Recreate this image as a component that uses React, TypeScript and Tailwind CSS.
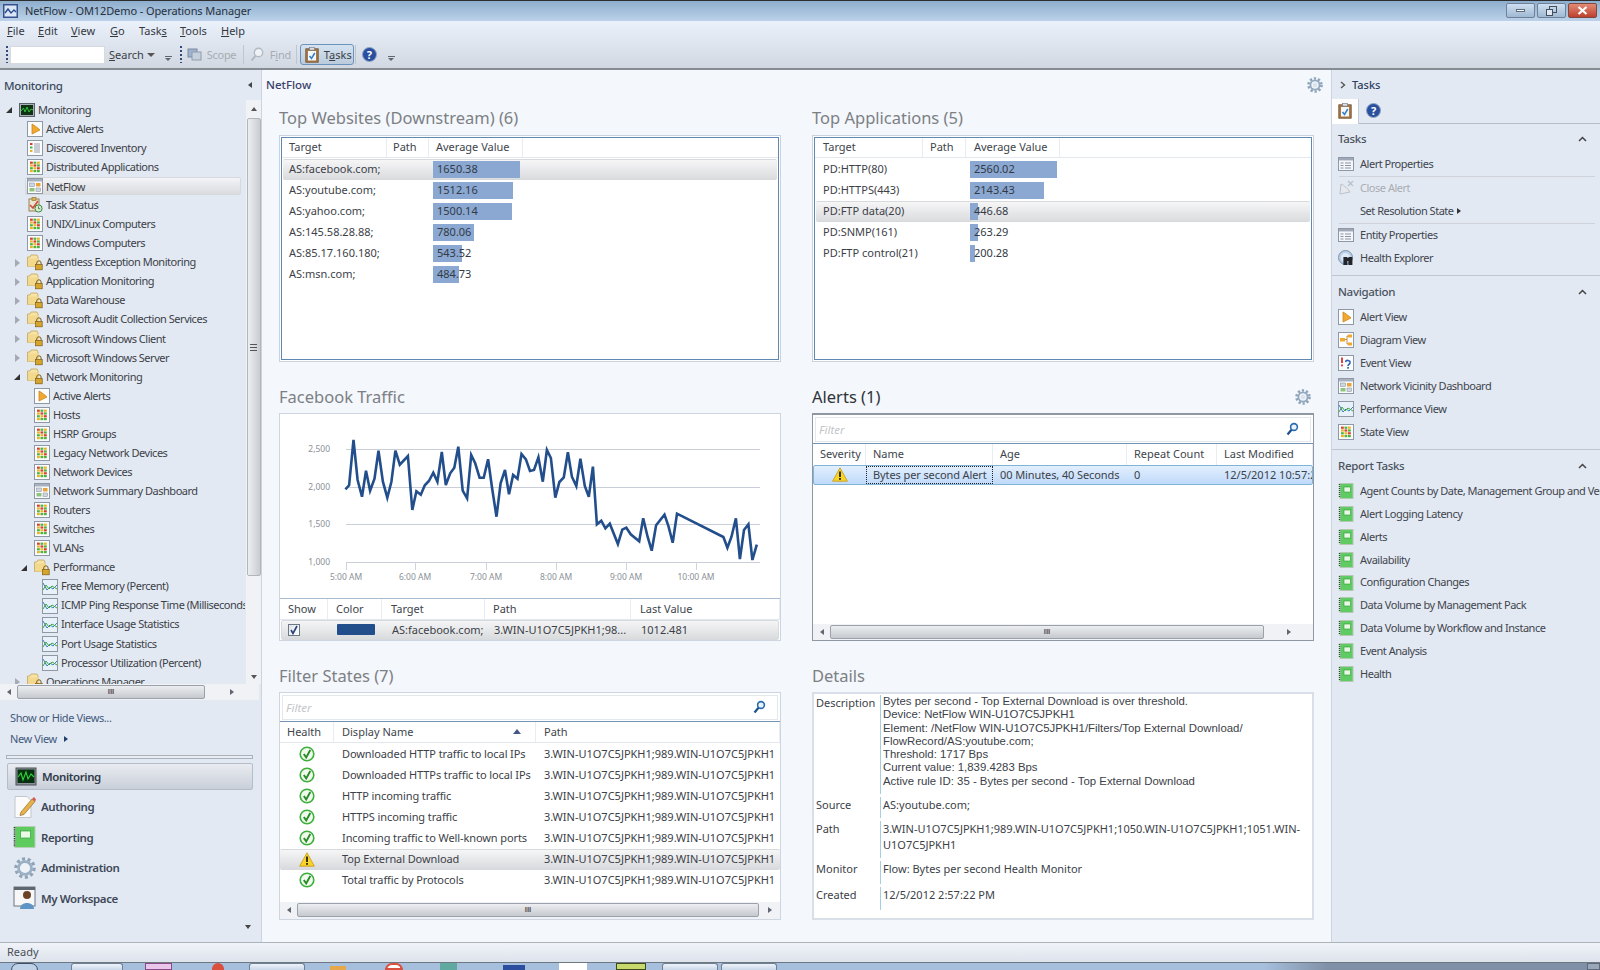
import { ReactNode } from 'react';

// small 16px view icons
function Frame({ children }: { children: ReactNode }) {
  return (
    <svg width="16" height="16" viewBox="0 0 16 16" className="shrink-0">
      <rect x="0.5" y="0.5" width="15" height="15" fill="#fbfcfe" stroke="#8f98a5" />
      {children}
    </svg>
  );
}

function StateIcon() {
  const c = ['#d8402c', '#4eb33c', '#e9b422', '#e9b422', '#d8402c', '#4eb33c', '#4eb33c', '#e9b422', '#d8402c', '#e9b422', '#4eb33c', '#4eb33c'];
  return (
    <Frame>
      {c.map((f, i) => (
        <rect key={i} x={3 + (i % 3) * 3.5} y={2.6 + Math.floor(i / 3) * 2.8} width="2.8" height="2.2" fill={f} />
      ))}
    </Frame>
  );
}

function AlertIcon() {
  return (
    <Frame>
      <path d="M5 3 C7 4 11 7 13 9 L5 13 Z" fill="#f0a92e" stroke="#c77d16" strokeWidth="0.7" />
    </Frame>
  );
}

function InventoryIcon() {
  return (
    <Frame>
      <rect x="3" y="3" width="2.5" height="2" fill="#d8402c" />
      <rect x="3" y="6.5" width="2.5" height="2" fill="#4eb33c" />
      <rect x="3" y="10" width="2.5" height="2" fill="#e9b422" />
      <path d="M7 4h6M7 6h6M7 8h6M7 10h6M7 12h6" stroke="#8a93a3" strokeWidth="0.9" />
    </Frame>
  );
}

function DashIcon() {
  return (
    <Frame>
      <rect x="1" y="1" width="14" height="2.5" fill="#a7b1bf" />
      <rect x="2.5" y="5" width="5" height="3.5" fill="#cfd6df" stroke="#7f8896" strokeWidth="0.5" />
      <rect x="9" y="5" width="4.5" height="3.5" fill="#e8a33a" />
      <rect x="2.5" y="10" width="5" height="3.5" fill="#8fc37c" />
      <rect x="9" y="10" width="4.5" height="3.5" fill="#cfd6df" stroke="#7f8896" strokeWidth="0.5" />
    </Frame>
  );
}

function PerfIcon() {
  return (
    <Frame>
      <rect x="1" y="1" width="14" height="14" fill="#e8f0fa" />
      <path d="M1 4 L5 11 L8 8 L11 10 L15 6" stroke="#3d7fc7" strokeWidth="1" fill="none" />
      <path d="M1 11 L4 6 L7 10 L10 7 L15 10" stroke="#41a83a" strokeWidth="1" fill="none" />
    </Frame>
  );
}

function TaskStatusIcon() {
  return (
    <svg width="16" height="16" viewBox="0 0 16 16" className="shrink-0">
      <rect x="2" y="2" width="10" height="12" fill="#e9e4d4" stroke="#9a8050" />
      <rect x="5" y="0.5" width="4" height="3" fill="#d8b25a" stroke="#8e6a24" strokeWidth="0.6" />
      <path d="M3 8 L6 11 L11 4" stroke="#d24a36" strokeWidth="1.6" fill="none" />
      <circle cx="11.5" cy="11.5" r="3.6" fill="#d7ecd2" stroke="#3a8a3a" />
      <path d="M11.5 9.5V11.7H13.2" stroke="#2f6f2f" strokeWidth="0.8" fill="none" />
    </svg>
  );
}

function FolderLock() {
  return (
    <svg width="16" height="17" viewBox="0 0 16 17" className="shrink-0">
      <path d="M0.5 3 H3 L4 1 H10 L11 3 V12.5 H0.5 Z" fill="#f7e3a6" stroke="#c2a45e" strokeWidth="0.8" />
      <rect x="1" y="4.5" width="11" height="8" fill="#f3d98d" />
      <path d="M9.7 10.5 V9 a2.2 2.2 0 0 1 4.4 0 V10.5" stroke="#7d5c17" fill="none" />
      <rect x="8.6" y="10.4" width="6.6" height="5.4" fill="#d6a52c" stroke="#7d5c17" strokeWidth="0.7" />
    </svg>
  );
}

function MonitorIcon() {
  return (
    <svg width="16" height="14" viewBox="0 0 16 14" className="shrink-0">
      <rect x="0.5" y="0.5" width="15" height="13" fill="#a9afb8" stroke="#5a6068" />
      <rect x="2" y="2" width="12" height="10" fill="#0d3313" />
      <path d="M2 8 L4.5 5 L6 9 L8 4 L10 9 L12 6 L14 7" stroke="#35d03f" strokeWidth="0.9" fill="none" />
    </svg>
  );
}

function ReportIcon() {
  return (
    <svg width="16" height="16" viewBox="0 0 16 16" className="shrink-0">
      <rect x="2" y="0.5" width="13" height="15" fill="#5fcb62" stroke="#b5c8b5" />
      <path d="M1.5 1v14" stroke="#2f4f33" strokeWidth="1.4" strokeDasharray="1 1" />
      <rect x="6" y="4" width="6.5" height="5" fill="#e7f8e4" stroke="#2f9a38" strokeWidth="0.6" />
    </svg>
  );
}

function PropsIcon() {
  return (
    <svg width="16" height="14" viewBox="0 0 16 14" className="shrink-0">
      <rect x="0.5" y="0.5" width="15" height="13" fill="#f4f6f9" stroke="#8f98a5" />
      <rect x="1" y="1" width="14" height="2.4" fill="#9ea8b6" />
      <path d="M2.5 6h3M7 6h6M2.5 8.5h3M7 8.5h6M2.5 11h3M7 11h6" stroke="#8a93a3" strokeWidth="1" />
    </svg>
  );
}

function CloseAlertIcon() {
  return (
    <svg width="16" height="16" viewBox="0 0 16 16" className="shrink-0">
      <path d="M3 4 C6 5 10 9 12 12 L2 14 Z" fill="#e6e8ec" stroke="#bcc1c9" />
      <path d="M10 1 L15 6 M15 1 L10 6" stroke="#bcc1c9" strokeWidth="1.4" />
    </svg>
  );
}

function HealthExplorerIcon() {
  return (
    <svg width="16" height="16" viewBox="0 0 16 16" className="shrink-0">
      <circle cx="7.5" cy="7.5" r="7" fill="#b9d0ea" stroke="#7f93a8" />
      <circle cx="7.5" cy="7.5" r="4.5" fill="#dfeaf6" />
      <rect x="5.4" y="7" width="4" height="8" fill="#22252a" />
      <rect x="10.4" y="7" width="4" height="8" fill="#22252a" />
      <rect x="9" y="8" width="2" height="3" fill="#22252a" />
    </svg>
  );
}

function DiagramIcon() {
  return (
    <Frame>
      <rect x="2" y="6" width="5" height="3.5" fill="#f0a92e" />
      <rect x="10" y="2.5" width="4" height="3" fill="#f0a92e" />
      <rect x="10" y="10.5" width="4" height="3" fill="#f0a92e" />
      <path d="M7 7.5h2V4h1M9 7.5V12h1" stroke="#b27618" strokeWidth="0.8" fill="none" />
    </Frame>
  );
}

function EventIcon() {
  return (
    <Frame>
      <path d="M4 2.5V8" stroke="#d7342a" strokeWidth="1.8" />
      <rect x="3.1" y="9.5" width="1.8" height="1.8" fill="#d7342a" />
      <path d="M7.5 7 C8 4.5 12.5 5 12 8 C11.7 9.5 10 9.5 10 11" stroke="#2e5fb5" strokeWidth="1.5" fill="none" />
      <rect x="9.2" y="12" width="1.7" height="1.7" fill="#2e5fb5" />
    </Frame>
  );
}

function Gear({ size = 16 }: { size?: number }) {
  return (
    <svg width={size} height={size} viewBox="0 0 16 16" className="shrink-0">
      <circle cx="8" cy="8" r="6.5" fill="none" stroke="#8ea4bb" strokeWidth="2.6" strokeDasharray="2.2 1.9" />
      <circle cx="8" cy="8" r="4.6" fill="#eef3f8" stroke="#93a8be" strokeWidth="1.8" />
      <circle cx="8" cy="8" r="2.2" fill="#dbe4ee" />
    </svg>
  );
}

function Magnifier() {
  return (
    <svg width="13" height="14" viewBox="0 0 13 14" className="shrink-0">
      <circle cx="8" cy="5" r="3.4" fill="#eaf3fb" stroke="#2a6cad" strokeWidth="1.6" />
      <path d="M5.5 7.8 L1.5 12.5" stroke="#1e4f8f" strokeWidth="2.2" />
    </svg>
  );
}

function OkIcon() {
  return (
    <svg width="16" height="16" viewBox="0 0 16 16" className="shrink-0">
      <circle cx="8" cy="8" r="6.8" fill="#f0fbee" stroke="#3fae3c" strokeWidth="1.6" />
      <path d="M4.8 8 L7.2 11.4 L11.3 4" fill="none" stroke="#2c8a2a" strokeWidth="1.9" />
    </svg>
  );
}

function WarnIcon() {
  return (
    <svg width="16" height="15" viewBox="0 0 16 15" className="shrink-0">
      <path d="M8 0.8 L15.4 14.2 H0.6 Z" fill="#f9d423" stroke="#c7971a" strokeWidth="0.8" />
      <path d="M8 4.6V10" stroke="#222" strokeWidth="1.8" />
      <rect x="7.1" y="11" width="1.8" height="1.8" fill="#222" />
    </svg>
  );
}

function ClipboardIcon() {
  return (
    <svg width="14" height="16" viewBox="0 0 14 16" className="shrink-0">
      <rect x="0.8" y="1.8" width="12.4" height="13.4" fill="#a8794a" stroke="#6f4c27" strokeWidth="0.8" />
      <rect x="3" y="4" width="8" height="9.5" fill="#f6f9fc" />
      <rect x="4.5" y="0.5" width="5" height="2.6" fill="#d9dee4" stroke="#6f7782" strokeWidth="0.6" />
      <path d="M4.5 9 L6.5 11.5 L9.8 6" stroke="#2f7fd0" strokeWidth="1.5" fill="none" />
    </svg>
  );
}

function HelpIcon() {
  return (
    <div className="w-[15px] h-[15px] rounded-full bg-[#2a4f9e] border border-[#8fa6c8] flex items-center justify-center text-white text-[11px] font-bold leading-none shrink-0">
      ?
    </div>
  );
}

// big wunderbar icons
function NavMonitoring() {
  return (
    <svg width="22" height="20" viewBox="0 0 22 20">
      <rect x="1" y="1" width="20" height="17" fill="#8d929a" stroke="#4b5058" />
      <rect x="2.5" y="2.5" width="17" height="13.5" fill="#07300e" />
      <path d="M3 10 L6 6 L8 13 L11 5 L13 12 L16 7 L19 10" stroke="#2fd23c" strokeWidth="1.1" fill="none" />
    </svg>
  );
}

function NavAuthoring() {
  return (
    <svg width="24" height="24" viewBox="0 0 24 24">
      <path d="M2 1.5 H14 L18 5.5 V22.5 H2 Z" fill="#fbfbfb" stroke="#c2c6cd" />
      <path d="M8 17 L19 4 L22 6.5 L11 19.5 L7 20.5 Z" fill="#e8b24a" stroke="#93702a" strokeWidth="0.7" />
      <path d="M19 4 L21 2 L23 4.5 L22 6.5 Z" fill="#d8574c" />
    </svg>
  );
}

function NavReporting() {
  return (
    <svg width="23" height="22" viewBox="0 0 23 22">
      <rect x="2" y="0.5" width="20" height="21" fill="#5ecb5f" stroke="#b7cdb7" />
      <path d="M1.5 1v20" stroke="#27402a" strokeWidth="1.6" strokeDasharray="1.2 1" />
      <rect x="7.5" y="5" width="10" height="7" fill="#e8f9e5" stroke="#33a03c" strokeWidth="0.7" />
    </svg>
  );
}

function NavAdmin() {
  return (
    <svg width="22" height="22" viewBox="0 0 22 22">
      <circle cx="11" cy="11" r="9" fill="none" stroke="#8fa3b8" strokeWidth="3.4" strokeDasharray="3 2.6" />
      <circle cx="11" cy="11" r="6.4" fill="#eff3f7" stroke="#9bb0c5" strokeWidth="2.6" />
    </svg>
  );
}

function NavWorkspace() {
  return (
    <svg width="24" height="24" viewBox="0 0 24 24">
      <rect x="1" y="1" width="21" height="19" fill="#f7f7f7" stroke="#6f7782" />
      <rect x="1" y="1" width="21" height="3" fill="#5e6670" />
      <circle cx="14" cy="9" r="4" fill="#6a4228" />
      <path d="M7 23 C7 15 21 15 21 23 Z" fill="#5f94c6" />
    </svg>
  );
}

// scrollbar bits
function ArrowH({ dir }: { dir: 'l' | 'r' }) {
  return (
    <span
      className={
        dir === 'l'
          ? 'w-0 h-0 border-y-[3px] border-y-transparent border-r-[4px] border-r-[#5f6670]'
          : 'w-0 h-0 border-y-[3px] border-y-transparent border-l-[4px] border-l-[#5f6670]'
      }
    />
  );
}

function Grip() {
  return <span className="text-[8px] leading-none text-[#555] font-['Liberation_Sans',sans-serif] font-bold">III</span>;
}

function HScroll({ className, thumbClass }: { className: string; thumbClass: string }) {
  return (
    <div className={`flex items-center bg-[#f0f2f5] ${className}`}>
      <div className="w-[17px] flex justify-center"><ArrowH dir="l" /></div>
      <div className={`h-[14px] rounded-[2px] border border-[#9aa1aa] bg-gradient-to-b from-[#eceef1] to-[#c6c9ce] flex items-center justify-center ${thumbClass}`}>
        <Grip />
      </div>
      <div className="flex-1 flex justify-center"><ArrowH dir="r" /></div>
    </div>
  );
}

type TreeRow = { label: string; level: number; icon: ReactNode; exp?: 'open' | 'closed'; selected?: boolean };

const treeRows: TreeRow[] = [
  { label: 'Monitoring', level: 0, icon: <MonitorIcon />, exp: 'open' },
  { label: 'Active Alerts', level: 1, icon: <AlertIcon /> },
  { label: 'Discovered Inventory', level: 1, icon: <InventoryIcon /> },
  { label: 'Distributed Applications', level: 1, icon: <StateIcon /> },
  { label: 'NetFlow', level: 1, icon: <DashIcon />, selected: true },
  { label: 'Task Status', level: 1, icon: <TaskStatusIcon /> },
  { label: 'UNIX/Linux Computers', level: 1, icon: <StateIcon /> },
  { label: 'Windows Computers', level: 1, icon: <StateIcon /> },
  { label: 'Agentless Exception Monitoring', level: 1, icon: <FolderLock />, exp: 'closed' },
  { label: 'Application Monitoring', level: 1, icon: <FolderLock />, exp: 'closed' },
  { label: 'Data Warehouse', level: 1, icon: <FolderLock />, exp: 'closed' },
  { label: 'Microsoft Audit Collection Services', level: 1, icon: <FolderLock />, exp: 'closed' },
  { label: 'Microsoft Windows Client', level: 1, icon: <FolderLock />, exp: 'closed' },
  { label: 'Microsoft Windows Server', level: 1, icon: <FolderLock />, exp: 'closed' },
  { label: 'Network Monitoring', level: 1, icon: <FolderLock />, exp: 'open' },
  { label: 'Active Alerts', level: 2, icon: <AlertIcon /> },
  { label: 'Hosts', level: 2, icon: <StateIcon /> },
  { label: 'HSRP Groups', level: 2, icon: <StateIcon /> },
  { label: 'Legacy Network Devices', level: 2, icon: <StateIcon /> },
  { label: 'Network Devices', level: 2, icon: <StateIcon /> },
  { label: 'Network Summary Dashboard', level: 2, icon: <DashIcon /> },
  { label: 'Routers', level: 2, icon: <StateIcon /> },
  { label: 'Switches', level: 2, icon: <StateIcon /> },
  { label: 'VLANs', level: 2, icon: <StateIcon /> },
  { label: 'Performance', level: 2, icon: <FolderLock />, exp: 'open' },
  { label: 'Free Memory (Percent)', level: 3, icon: <PerfIcon /> },
  { label: 'ICMP Ping Response Time (Milliseconds)', level: 3, icon: <PerfIcon /> },
  { label: 'Interface Usage Statistics', level: 3, icon: <PerfIcon /> },
  { label: 'Port Usage Statistics', level: 3, icon: <PerfIcon /> },
  { label: 'Processor Utilization (Percent)', level: 3, icon: <PerfIcon /> },
  { label: 'Operations Manager', level: 1, icon: <FolderLock />, exp: 'closed' },
];

const levelPad = ['pl-[3px]', 'pl-[11px]', 'pl-[18px]', 'pl-[26px]'];

function Expander({ kind }: { kind?: 'open' | 'closed' }) {
  if (kind === 'open') {
    return <span className="w-0 h-0 border-l-[6px] border-l-transparent border-b-[6px] border-b-[#333]" />;
  }
  if (kind === 'closed') {
    return <span className="w-0 h-0 border-y-[4px] border-y-transparent border-l-[5px] border-l-[#a4abb5]" />;
  }
  return null;
}

function Tree() {
  return (
    <div className="h-[584px] flex">
      <div className="w-[245px] overflow-hidden">
        {treeRows.map((r, i) => (
          <div key={i} className={`h-[19.07px] flex items-center whitespace-nowrap tracking-[-0.48px] ${levelPad[r.level]}`}>
            <div className="w-[16px] shrink-0 flex justify-center pr-[4px]"><Expander kind={r.exp} /></div>
            <div className="relative z-10 w-[16px] h-[17px] shrink-0 flex items-center justify-center"><div className="flex">{r.icon}</div></div>
            <div
              className={
                r.selected
                  ? 'ml-[-18px] pl-[20px] w-[216px] h-[18px] leading-[17px] rounded-[2px] border border-[#d6d9de] bg-gradient-to-b from-[#f3f4f6] to-[#d9dbdf]'
                  : 'pl-[3px]'
              }
            >
              {r.label}
            </div>
          </div>
        ))}
      </div>
      <div className="w-[15px] ml-[1px] bg-[#f0f2f5] flex flex-col items-center">
        <div className="h-[18px] flex items-center"><span className="w-0 h-0 border-x-[3px] border-x-transparent border-b-[4px] border-b-[#555]" /></div>
        <div className="w-[14px] h-[458px] rounded-[2px] border border-[#b1b6bd] bg-gradient-to-r from-[#eceef1] to-[#c9ccd1] flex items-center justify-center">
          <span className="w-[7px] h-[7px] border-y border-[#555] flex items-center"><span className="w-full h-px bg-[#555]" /></span>
        </div>
        <div className="flex-1 flex items-end pb-[5px]"><span className="w-0 h-0 border-x-[3px] border-x-transparent border-t-[4px] border-t-[#555]" /></div>
      </div>
    </div>
  );
}

const wunderbar = [
  { label: 'Monitoring', icon: <NavMonitoring />, active: true },
  { label: 'Authoring', icon: <NavAuthoring /> },
  { label: 'Reporting', icon: <NavReporting /> },
  { label: 'Administration', icon: <NavAdmin /> },
  { label: 'My Workspace', icon: <NavWorkspace /> },
];

function LeftPanel() {
  return (
    <aside className="w-[262px] shrink-0 bg-[#e3e9f2] border-r border-[#cdd4de] flex flex-col">
      <div className="h-[30.5px] flex items-center justify-between pl-[4px] pr-[9px] text-[11.5px] tracking-[-0.3px] font-medium text-[#3c4a60]">
        <span>Monitoring</span>
        <span className="w-0 h-0 border-y-[3.5px] border-y-transparent border-r-[4px] border-r-[#444]" />
      </div>
      <Tree />
      <HScroll className="h-[16px] w-[259px]" thumbClass="w-[188px]" />
      <div className="pl-[10px] mt-[7px] h-[21px] flex items-center text-[#3f5a7d] tracking-[-0.4px]">Show or Hide Views...</div>
      <div className="pl-[10px] h-[21px] flex items-center text-[#3f5a7d] gap-[7px] tracking-[-0.4px]">
        New View
        <span className="w-0 h-0 border-y-[3.5px] border-y-transparent border-l-[4px] border-l-[#23406c]" />
      </div>
      <div className="mx-[6px] mt-[6px] w-[247px] h-[4px] border border-[#aab1bb] bg-[#e9edf3]" />
      <div className="mt-[4px] flex flex-col">
        {wunderbar.map(w => (
          <div
            key={w.label}
            className={
              w.active
                ? 'mx-[7px] w-[246px] h-[27px] mb-[3px] rounded-[2px] border border-[#b4bdc9] bg-gradient-to-b from-[#e9ecf1] to-[#c9cfd9] flex items-center text-[11.5px] tracking-[-0.4px] font-semibold text-[#303a48]'
                : 'mx-[7px] w-[246px] h-[27px] mb-[3.4px] flex items-center text-[11.5px] tracking-[-0.4px] font-semibold text-[#3d4858]'
            }
          >
            <div className="w-[34px] flex justify-center pl-[1px] shrink-0">{w.icon}</div>
            <span>{w.label}</span>
          </div>
        ))}
      </div>
      <div className="flex justify-end pr-[10px] mt-[10px]">
        <span className="w-0 h-0 border-x-[3.5px] border-x-transparent border-t-[4px] border-t-[#444]" />
      </div>
    </aside>
  );
}

function Section({ title, dark, gear, top, children }: { title: string; dark?: boolean; gear?: boolean; top?: boolean; children: ReactNode }) {
  return (
    <section className="w-[502px] flex flex-col">
      <div className={top ? 'h-[29px] flex items-center justify-between pr-[3px] pb-[5px]' : 'h-[29px] flex items-center justify-between pr-[3px] pb-[2px]'}>
        <h2 className={dark ? 'text-[16.5px] text-[#2f3338]' : 'text-[16.5px] text-[#7c8084]'}>{title}</h2>
        {gear && <Gear />}
      </div>
      {children}
    </section>
  );
}

type Col = { label: string; className: string };

function HeaderRow({ cols, className }: { cols: Col[]; className?: string }) {
  return (
    <div className={`flex text-[#40454c] border-b border-[#e3e8ef] ${className ?? ''}`}>
      {cols.map(c => (
        <div key={c.label} className={`border-r border-[#e8edf3] flex items-center whitespace-nowrap shrink-0 ${c.className}`}>
          {c.label}
        </div>
      ))}
    </div>
  );
}

type BarRow = { name: string; value: string; bar: number };

function BarTable({ cols, rows, selected, firstCol }: { cols: Col[]; rows: BarRow[]; selected: number; firstCol: string }) {
  return (
    <div className="h-[227px] border border-[#c9d3df] bg-white p-px">
      <div className="h-full border border-[#5f89b2] bg-white">
        <HeaderRow cols={cols} className="h-[20px]" />
        <div className="pt-px">
          {rows.map((r, i) => (
            <div
              key={r.name}
              className={
                i === selected
                  ? 'h-[21px] flex items-center rounded-[2px] mx-px border-y border-[#d6d9de] bg-gradient-to-b from-[#f6f6f7] to-[#dbdcde]'
                  : 'h-[21px] flex items-center mx-px'
              }
            >
              <div className={`shrink-0 ${firstCol}`}>{r.name}</div>
              <div className="relative h-[17px] flex items-center">
                <div className="absolute left-0 top-0 h-[17px] bg-[#8aa8d2]" style={{ width: r.bar }} />
                <span className="relative pl-[4px] text-[#333a45]">{r.value}</span>
              </div>
            </div>
          ))}
        </div>
      </div>
    </div>
  );
}

const rawLine: [number, number][] = [
  [226,328],[237,316],[250,180],[262,300],[275,350],[287,272],[299,332],[312,296],[324,212],[337,305],[350,353],[362,305],[374,212],[387,254],[411,228],[424,390],[436,334],[449,344],[461,316],[473,303],[486,278],[498,305],[511,216],[523,315],[536,280],[548,263],[560,200],[573,332],[586,355],[598,225],[610,250],[623,293],[635,293],[648,238],[660,325],[673,410],[685,310],[698,270],[710,343],[722,285],[735,296],[747,222],[760,238],[772,273],[784,270],[797,232],[810,305],[822,210],[834,234],[847,353],[859,306],[872,292],[884,217],[896,290],[909,318],[921,236],[934,318],[946,350],[958,260],[970,433],[983,422],[995,445],[1008,431],[1032,492],[1045,449],[1057,443],[1070,463],[1095,484],[1107,415],[1120,470],[1132,512],[1145,436],[1170,404],[1182,440],[1194,488],[1207,401],[1344,471],[1356,503],[1368,470],[1381,415],[1393,537],[1405,450],[1418,433],[1430,540],[1443,494],
];

function TrafficChart() {
  const pts = rawLine.map(([x, y]) => `${(x / 2.958 - 11).toFixed(1)},${(y / 3 - 34).toFixed(1)}`).join(' ');
  const grid = [
    { y: 35, label: '2,500' },
    { y: 73, label: '2,000' },
    { y: 110, label: '1,500' },
    { y: 148, label: '1,000' },
  ];
  const ticks = [
    { x: 66, label: '5:00 AM' },
    { x: 135, label: '6:00 AM' },
    { x: 206, label: '7:00 AM' },
    { x: 276, label: '8:00 AM' },
    { x: 346, label: '9:00 AM' },
    { x: 416, label: '10:00 AM' },
  ];
  return (
    <svg width="498" height="184" viewBox="0 0 498 184" className="block shrink-0">
      {grid.map(g => (
        <g key={g.y}>
          <line x1="66" x2="480" y1={g.y + 0.5} y2={g.y + 0.5} stroke="#c9ced8" />
          <text x="50" y={g.y + 3} textAnchor="end" fontSize="8.5" fill="#8b8f96">{g.label}</text>
        </g>
      ))}
      {ticks.map(t => (
        <g key={t.x}>
          <line x1={t.x + 0.5} x2={t.x + 0.5} y1="148" y2="156" stroke="#cfd4dc" />
          <text x={t.x} y="166" textAnchor="middle" fontSize="8.5" fill="#8b8f96">{t.label}</text>
        </g>
      ))}
      <polyline points={pts} fill="none" stroke="#234e8c" strokeWidth="2.6" strokeLinejoin="miter" />
    </svg>
  );
}

function ChartPanel() {
  return (
    <div className="h-[228px] border border-[#ccd5e0] bg-white flex flex-col">
      <TrafficChart />
      <div className="border-t border-[#a9bdd2]">
        <HeaderRow
          className="h-[21px]"
          cols={[
            { label: 'Show', className: 'w-[48px] pl-[8px]' },
            { label: 'Color', className: 'w-[54px] pl-[8px]' },
            { label: 'Target', className: 'w-[103px] pl-[9px]' },
            { label: 'Path', className: 'w-[146px] pl-[8px]' },
            { label: 'Last Value', className: 'flex-1 pl-[9px]' },
          ]}
        />
      </div>
      <div className="flex-1 mx-px flex items-center border border-[#d6d9de] rounded-[2px] bg-gradient-to-b from-[#f5f5f6] to-[#dadbdd] whitespace-nowrap">
        <div className="w-[47px] pl-[6px]">
          <div className="w-[12px] h-[12px] border border-[#6c7886] bg-gradient-to-br from-[#dfe3ea] to-[#fff] flex items-center justify-center">
            <svg width="10" height="10" viewBox="0 0 10 10"><path d="M2 5 L4 8.5 L8 1" stroke="#2b3f78" strokeWidth="1.6" fill="none" /></svg>
          </div>
        </div>
        <div className="w-[54px] pl-[8px]"><div className="w-[38px] h-[11px] rounded-[1px] bg-[#234e8c]" /></div>
        <div className="w-[103px] pl-[9px]">AS:facebook.com;</div>
        <div className="w-[146px] pl-[8px]">3.WIN-U1O7C5JPKH1;98...</div>
        <div className="pl-[9px]">1012.481</div>
      </div>
    </div>
  );
}

function FilterBox() {
  return (
    <div className="h-[25px] mx-[2px] mt-[2px] border border-[#e3e8ef] bg-white flex items-center justify-between pl-[3px] pr-[11px] italic text-[#c3c6cb] text-[11.5px]">
      <span>Filter</span>
      <Magnifier />
    </div>
  );
}

function AlertsPanel() {
  const cols: Col[] = [
    { label: 'Severity', className: 'w-[53px] pl-[7px]' },
    { label: 'Name', className: 'w-[127px] pl-[7px]' },
    { label: 'Age', className: 'w-[134px] pl-[7px]' },
    { label: 'Repeat Count', className: 'w-[90px] pl-[7px]' },
    { label: 'Last Modified', className: 'flex-1 pl-[7px]' },
  ];
  return (
    <div className="h-[228px] border border-[#8e97a3] border-t-2 bg-white flex flex-col overflow-hidden">
      <FilterBox />
      <div className="border-t border-[#7394b5] mt-[1px]">
        <HeaderRow cols={cols} className="h-[21px] border-b-0" />
      </div>
      <div className="h-[20px] flex items-center border border-[#7fb4d6] rounded-[2px] bg-gradient-to-b from-[#e2effd] to-[#c0dafb] whitespace-nowrap overflow-hidden">
        <div className="w-[52px] flex justify-center shrink-0"><WarnIcon /></div>
        <div className="w-[127px] h-full pl-[6px] flex items-center border border-dotted border-[#222] shrink-0 tracking-[-0.1px]">Bytes per second Alert</div>
        <div className="w-[134px] pl-[7px] shrink-0 tracking-[-0.1px]">00 Minutes, 40 Seconds</div>
        <div className="w-[90px] pl-[7px] shrink-0">0</div>
        <div className="pl-[7px] shrink-0">12/5/2012 10:57:22 AM</div>
      </div>
      <div className="flex-1" />
      <HScroll className="h-[16px]" thumbClass="w-[434px]" />
    </div>
  );
}

const filterRows = [
  'Downloaded HTTP traffic to local IPs',
  'Downloaded HTTPs traffic to local IPs',
  'HTTP incoming traffic',
  'HTTPS incoming traffic',
  'Incoming traffic to Well-known ports',
  'Top External Download',
  'Total traffic by Protocols',
];

function FilterStates() {
  return (
    <div className="h-[228px] border border-[#ccd5e0] bg-white flex flex-col overflow-hidden">
      <FilterBox />
      <div className="border-t border-[#7394b5] mt-[1px] relative">
        <HeaderRow
          className="h-[21px]"
          cols={[
            { label: 'Health', className: 'w-[54px] pl-[7px]' },
            { label: 'Display Name', className: 'w-[202px] pl-[8px]' },
            { label: 'Path', className: 'flex-1 pl-[8px]' },
          ]}
        />
        <span className="absolute left-[233px] top-[7px] w-0 h-0 border-x-[4px] border-x-transparent border-b-[5px] border-b-[#44578a]" />
      </div>
      <div className="pt-px">
        {filterRows.map((name, i) => (
          <div
            key={name}
            className={
              i === 5
                ? 'h-[21px] flex items-center whitespace-nowrap rounded-[2px] border-y border-[#d6d9de] bg-gradient-to-b from-[#f6f6f7] to-[#d9dadd]'
                : 'h-[21px] flex items-center whitespace-nowrap'
            }
          >
            <div className="w-[54px] flex justify-center shrink-0 pr-[1px]">{i === 5 ? <WarnIcon /> : <OkIcon />}</div>
            <div className="w-[202px] pl-[8px] shrink-0 tracking-[-0.1px]">{name}</div>
            <div className="pl-[8px] overflow-hidden">3.WIN-U1O7C5JPKH1;989.WIN-U1O7C5JPKH1</div>
          </div>
        ))}
      </div>
      <div className="flex-1" />
      <HScroll className="h-[17px]" thumbClass="w-[462px]" />
    </div>
  );
}

function DetailRow({ label, height, children }: { label: string; height: string; children: ReactNode }) {
  return (
    <div className={`flex ${height}`}>
      <div className="w-[66px] shrink-0 pl-[2px]">{label}</div>
      <div className="flex-1 border-l border-[#a5cfe0] pl-[2px]">{children}</div>
    </div>
  );
}

function DetailsPanel() {
  return (
    <div className="h-[228px] border-2 border-[#d9dfe8] bg-white pt-[1px] leading-[16px] overflow-hidden">
      <DetailRow label="Description" height="h-[99px]">
        <div className="font-['Liberation_Sans',sans-serif] text-[11.4px] leading-[13.3px] text-[#3c4148]">
          Bytes per second - Top External Download is over threshold.<br />
          Device: NetFlow WIN-U1O7C5JPKH1<br />
          Element: /NetFlow WIN-U1O7C5JPKH1/Filters/Top External Download/<br />
          FlowRecord/AS:youtube.com;<br />
          Threshold: 1717 Bps<br />
          Current value: 1,839.4283 Bps<br />
          Active rule ID: 35 - Bytes per second - Top External Download
        </div>
      </DetailRow>
      <DetailRow label="Source" height="h-[24px] pt-[3px]">AS:youtube.com;</DetailRow>
      <DetailRow label="Path" height="h-[40px] pt-[3px]">
        3.WIN-U1O7C5JPKH1;989.WIN-U1O7C5JPKH1;1050.WIN-U1O7C5JPKH1;1051.WIN-<br />U1O7C5JPKH1
      </DetailRow>
      <DetailRow label="Monitor" height="h-[26px] pt-[3px]">Flow: Bytes per second Health Monitor</DetailRow>
      <DetailRow label="Created" height="h-[26px] pt-[3px]">12/5/2012 2:57:22 PM</DetailRow>
    </div>
  );
}

const websites: BarRow[] = [
  { name: 'AS:facebook.com;', value: '1650.38', bar: 87 },
  { name: 'AS:youtube.com;', value: '1512.16', bar: 80 },
  { name: 'AS:yahoo.com;', value: '1500.14', bar: 79 },
  { name: 'AS:145.58.28.88;', value: '780.06', bar: 41 },
  { name: 'AS:85.17.160.180;', value: '543.52', bar: 29 },
  { name: 'AS:msn.com;', value: '484.73', bar: 26 },
];

const apps: BarRow[] = [
  { name: 'PD:HTTP(80)', value: '2560.02', bar: 87 },
  { name: 'PD:HTTPS(443)', value: '2143.43', bar: 74 },
  { name: 'PD:FTP data(20)', value: '446.68', bar: 8 },
  { name: 'PD:SNMP(161)', value: '263.29', bar: 8 },
  { name: 'PD:FTP control(21)', value: '200.28', bar: 5 },
];

function MainPanel() {
  return (
    <main className="flex-1 bg-[#f4f7fc] flex flex-col pl-[17px]">
      <div className="h-[30px] ml-[-13px] mr-[8px] flex items-center justify-between text-[#3c3f6a] font-medium text-[11.5px]">
        <span>NetFlow</span>
        <Gear />
      </div>
      <div className="h-[6px]" />
      <div className="flex gap-[31px]">
        <Section top title="Top Websites (Downstream) (6)">
          <BarTable
            selected={0}
            firstCol="w-[150px] pl-[6px]"
            rows={websites}
            cols={[
              { label: 'Target', className: 'w-[105px] pl-[7px]' },
              { label: 'Path', className: 'w-[42px] pl-[6px]' },
              { label: 'Average Value', className: 'w-[94px] pl-[7px]' },
            ]}
          />
        </Section>
        <Section top title="Top Applications (5)">
          <BarTable
            selected={2}
            firstCol="w-[154px] pl-[7px]"
            rows={apps}
            cols={[
              { label: 'Target', className: 'w-[108px] pl-[8px]' },
              { label: 'Path', className: 'w-[43px] pl-[7px]' },
              { label: 'Average Value', className: 'w-[94px] pl-[8px]' },
            ]}
          />
        </Section>
      </div>
      <div className="h-[22px]" />
      <div className="flex gap-[31px]">
        <Section title="Facebook Traffic"><ChartPanel /></Section>
        <Section title="Alerts (1)" dark gear><AlertsPanel /></Section>
      </div>
      <div className="h-[22px]" />
      <div className="flex gap-[31px]">
        <Section title="Filter States (7)"><FilterStates /></Section>
        <Section title="Details"><DetailsPanel /></Section>
      </div>
    </main>
  );
}

function TaskItem({ icon, label, muted, className }: { icon?: ReactNode; label: string; muted?: boolean; className?: string }) {
  return (
    <div className={`h-[23px] flex items-center whitespace-nowrap tracking-[-0.48px] ${muted ? 'text-[#a9adb4]' : 'text-[#3f454e]'} ${className ?? ''}`}>
      <div className="w-[16px] ml-[6px] mr-[6px] shrink-0 flex justify-center">{icon}</div>
      <span>{label}</span>
    </div>
  );
}

function TaskHeader({ label }: { label: string }) {
  return (
    <div className="h-[26px] flex items-center justify-between pl-[6px] pr-[13px] text-[11.5px] tracking-[-0.3px] font-medium text-[#4a5361]">
      <span>{label}</span>
      <svg width="9" height="6" viewBox="0 0 9 6"><path d="M1 5 L4.5 1.5 L8 5" stroke="#444" strokeWidth="1.5" fill="none" /></svg>
    </div>
  );
}

const reports = [
  'Agent Counts by Date, Management Group and Version',
  'Alert Logging Latency',
  'Alerts',
  'Availability',
  'Configuration Changes',
  'Data Volume by Management Pack',
  'Data Volume by Workflow and Instance',
  'Event Analysis',
  'Health',
];

function RightPanel() {
  return (
    <aside className="w-[269px] shrink-0 bg-[#e3e9f2] border-l border-[#cdd4de] flex flex-col overflow-hidden">
      <div className="h-[29px] flex items-center pl-[8px] pt-[1px] text-[#2e3f63] text-[11px] font-medium">
        <svg width="6" height="8" viewBox="0 0 6 8" className="mr-[6px]"><path d="M1 1 L4.5 4 L1 7" stroke="#555" strokeWidth="1.4" fill="none" /></svg>
        Tasks
      </div>
      <div className="h-[25px] flex border-b border-[#b6bdc8]">
        <div className="w-[27px] h-[25px] bg-white border-r border-[#c4cad3] flex items-center justify-center"><ClipboardIcon /></div>
        <div className="ml-[7px] flex items-center"><HelpIcon /></div>
      </div>
      <div className="mt-[2px]"><TaskHeader label="Tasks" /></div>
      <div className="mt-[1px]">
        <TaskItem icon={<PropsIcon />} label="Alert Properties" />
        <div className="mx-[7px] w-[256px] h-px bg-[#cfd3d9]" />
        <TaskItem icon={<CloseAlertIcon />} label="Close Alert" muted />
        <div className="h-[23px] flex items-center pl-[28px] text-[#3f454e] gap-[3px] tracking-[-0.48px]">
          Set Resolution State
          <span className="w-0 h-0 border-y-[3.5px] border-y-transparent border-l-[4px] border-l-[#333]" />
        </div>
        <div className="mx-[7px] w-[256px] h-px bg-[#cfd3d9]" />
        <TaskItem icon={<PropsIcon />} label="Entity Properties" />
        <TaskItem icon={<HealthExplorerIcon />} label="Health Explorer" />
      </div>
      <div className="mt-[5px] h-px bg-[#c1c6ce]" />
      <div className="mt-[3px]"><TaskHeader label="Navigation" /></div>
      <div className="mt-[1px]">
        <TaskItem icon={<AlertIcon />} label="Alert View" />
        <TaskItem icon={<DiagramIcon />} label="Diagram View" />
        <TaskItem icon={<EventIcon />} label="Event View" />
        <TaskItem icon={<DashIcon />} label="Network Vicinity Dashboard" />
        <TaskItem icon={<PerfIcon />} label="Performance View" />
        <TaskItem icon={<StateIcon />} label="State View" />
      </div>
      <div className="mt-[5px] h-px bg-[#c1c6ce]" />
      <div className="mt-[3px]"><TaskHeader label="Report Tasks" /></div>
      <div className="mt-[1px]">
        {reports.map(r => (
          <TaskItem key={r} icon={<ReportIcon />} label={r} className="!h-[22.8px]" />
        ))}
      </div>
    </aside>
  );
}

function GripDots() {
  return <div className="w-[2px] h-[17px] bg-[repeating-linear-gradient(180deg,#2f4a7a_0,#2f4a7a_2px,transparent_2px,transparent_4px)] shrink-0" />;
}

function Overflow() {
  return (
    <div className="flex flex-col items-center gap-[1px] mt-[7px]">
      <span className="w-[7px] h-px bg-[#5d6673]" />
      <span className="w-0 h-0 border-x-[3px] border-x-transparent border-t-[3px] border-t-[#5d6673]" />
    </div>
  );
}

function ToolSep() {
  return <div className="w-px h-[19px] bg-[#c0c6cf] shrink-0" />;
}

function Chrome() {
  return (
    <>
      <div className="h-[21px] border-t border-[#2e2e30] bg-gradient-to-b from-[#8eaecd] to-[#bcd2e9] flex items-center">
        <svg width="15" height="14" viewBox="0 0 15 14" className="ml-[3px]">
          <rect width="15" height="14" fill="#36518f" />
          <rect x="1.5" y="1.5" width="12" height="11" fill="#dbe6f5" />
          <path d="M2 9 L5 5 L8 9 L11 6 L13 8" stroke="#2b4a8f" strokeWidth="1.4" fill="none" />
        </svg>
        <span className="ml-[7px] text-[#27303c] tracking-[-0.1px]">NetFlow - OM12Demo - Operations Manager</span>
        <div className="ml-auto mr-[3px] flex gap-[2px] self-start mt-[2px]">
          <div className="w-[29px] h-[15px] rounded-[2px] border border-[#6e8199] bg-gradient-to-b from-[#cfe0f1] to-[#9fb9d3] flex items-center justify-center"><span className="w-[9px] h-[3px] bg-white border border-[#5c6a7a]" /></div>
          <div className="w-[29px] h-[15px] rounded-[2px] border border-[#6e8199] bg-gradient-to-b from-[#cfe0f1] to-[#9fb9d3] flex items-center justify-center">
            <svg width="11" height="10" viewBox="0 0 11 10"><rect x="3.5" y="0.5" width="7" height="6" fill="none" stroke="#44505e" /><rect x="0.5" y="3.5" width="6" height="6" fill="#dfe8f2" stroke="#44505e" /></svg>
          </div>
          <div className="w-[29px] h-[15px] rounded-[2px] border border-[#7e4a40] bg-gradient-to-b from-[#e28a76] to-[#bd3f2c] flex items-center justify-center">
            <svg width="11" height="9" viewBox="0 0 11 9"><path d="M1.5 1 L9.5 8 M9.5 1 L1.5 8" stroke="#fff" strokeWidth="2.2" /></svg>
          </div>
        </div>
      </div>
      <div className="bg-gradient-to-b from-[#eaf1fb] to-[#d2d8e1] border-b-2 border-[#878c93]">
        <div className="h-[21px] flex items-center pl-[7px] text-[#33383f]">
          <div className="w-[31px]"><u>F</u>ile</div>
          <div className="w-[33px]"><u>E</u>dit</div>
          <div className="w-[39px]"><u>V</u>iew</div>
          <div className="w-[29px]"><u>G</u>o</div>
          <div className="w-[41px]">Task<u>s</u></div>
          <div className="w-[41px]"><u>T</u>ools</div>
          <div><u>H</u>elp</div>
        </div>
        <div className="h-[26px] flex items-center pl-[6px] text-[#3a3f47]">
          <GripDots />
          <input className="ml-[2px] w-[95px] h-[18px] bg-white border border-[#d5dae1]" readOnly aria-label="Search" />
          <span className="ml-[4px]"><u>S</u>earch</span>
          <span className="ml-[3px] w-0 h-0 border-x-[4px] border-x-transparent border-t-[4px] border-t-[#555]" />
          <div className="ml-[10px]"><Overflow /></div>
          <div className="ml-[8px]"><GripDots /></div>
          <svg width="15" height="14" viewBox="0 0 15 14" className="ml-[5px]"><rect x="1" y="1" width="9" height="8" fill="#9fb4d0" stroke="#7c8aa0" /><rect x="5" y="4" width="9" height="8" fill="#c5d0df" stroke="#8f9bab" /></svg>
          <span className="ml-[5px] w-[30px] text-[#a7acb3] tracking-[-0.3px]">Scope</span>
          <div className="ml-[6px]"><ToolSep /></div>
          <svg width="14" height="15" viewBox="0 0 14 15" className="ml-[6px]"><circle cx="8.5" cy="5.5" r="4.2" fill="#eef1f5" stroke="#b4bac2" strokeWidth="1.4" /><path d="M5.5 9 L1.5 13.5" stroke="#b4bac2" strokeWidth="2" /></svg>
          <span className="ml-[6px] w-[20px] text-[#a7acb3] tracking-[-0.2px]">F<u>i</u>nd</span>
          <div className="ml-[6px]"><ToolSep /></div>
          <div className="ml-[3px] w-[54px] h-[21px] rounded-[3px] border border-[#6b93bb] bg-gradient-to-b from-[#d5e3f1] to-[#bccbdc] flex items-center pl-[4px]">
            <ClipboardIcon />
            <span className="ml-[5px]">T<u>a</u>sks</span>
          </div>
          <div className="ml-[1px]"><ToolSep /></div>
          <div className="ml-[6px]"><HelpIcon /></div>
          <div className="ml-[11px]"><Overflow /></div>
        </div>
      </div>
    </>
  );
}

function Taskbar() {
  const btn = 'h-[7px] shrink-0 rounded-t-[3px] border border-b-0 border-[#6e8094] bg-gradient-to-b from-[#eef3f9] to-[#c9d8e9]';
  return (
    <div className="h-[7px] overflow-hidden flex items-start bg-[linear-gradient(90deg,#a6bfdc_0%,#a6bfdc_79%,#8090a6_83%,#8090a6_100%)]">
      <div className="ml-[11px] w-[27px] h-[14px] shrink-0 rounded-full border border-[#3d4f66] bg-[#bfd1e6]" />
      <div className={`ml-[33px] w-[52px] ${btn}`} />
      <div className="ml-[22px] w-[27px] h-[7px] shrink-0 bg-[#e9c6ea] border border-[#8a4a8a]" />
      <div className="ml-[40px] w-[12px] h-[7px] shrink-0 rounded-t-full bg-[#d9503f]" />
      <div className={`ml-[25px] w-[56px] ${btn}`} />
      <div className="ml-[25px] w-[16px] h-[7px] shrink-0 bg-[#e6a84a] mt-[3px]" />
      <div className="ml-[39px] w-[18px] h-[7px] shrink-0 rounded-t-full border-2 border-[#d9503f] bg-white" />
      <div className="ml-[37px] w-[17px] h-[7px] shrink-0 bg-[#5fa9a0]" />
      <div className="ml-[46px] w-[22px] h-[7px] shrink-0 bg-[#2b4f9e] mt-[2px]" />
      <div className="ml-[34px] w-[28px] h-[7px] shrink-0 bg-white" />
      <div className="ml-[29px] w-[30px] h-[7px] shrink-0 bg-[#c6d96a] border border-[#3d4a20]" />
      <div className={`ml-[16px] w-[56px] ${btn}`} />
      <div className={`ml-[3px] w-[56px] ${btn}`} />
      <div className="ml-auto w-[13px] h-[7px] shrink-0 border border-[#5d6a7c] bg-[#9aa7b8]" />
    </div>
  );
}

export default function App() {
  return (
    <div className="w-[1600px] h-[970px] overflow-hidden flex flex-col bg-[#e3e9f2] font-['Noto_Sans',sans-serif] text-[11px] text-[#3c4148]">
      <Chrome />
      <div className="h-[873px] flex overflow-hidden">
        <LeftPanel />
        <MainPanel />
        <RightPanel />
      </div>
      <div className="h-[20px] border-t border-[#aeb4bc] bg-gradient-to-b from-[#f0f3f8] to-[#dde3ec] flex items-center pl-[7px] text-[#4a4f57]">Ready</div>
      <div className="border-t border-[#6f7780]"><Taskbar /></div>
    </div>
  );
}
